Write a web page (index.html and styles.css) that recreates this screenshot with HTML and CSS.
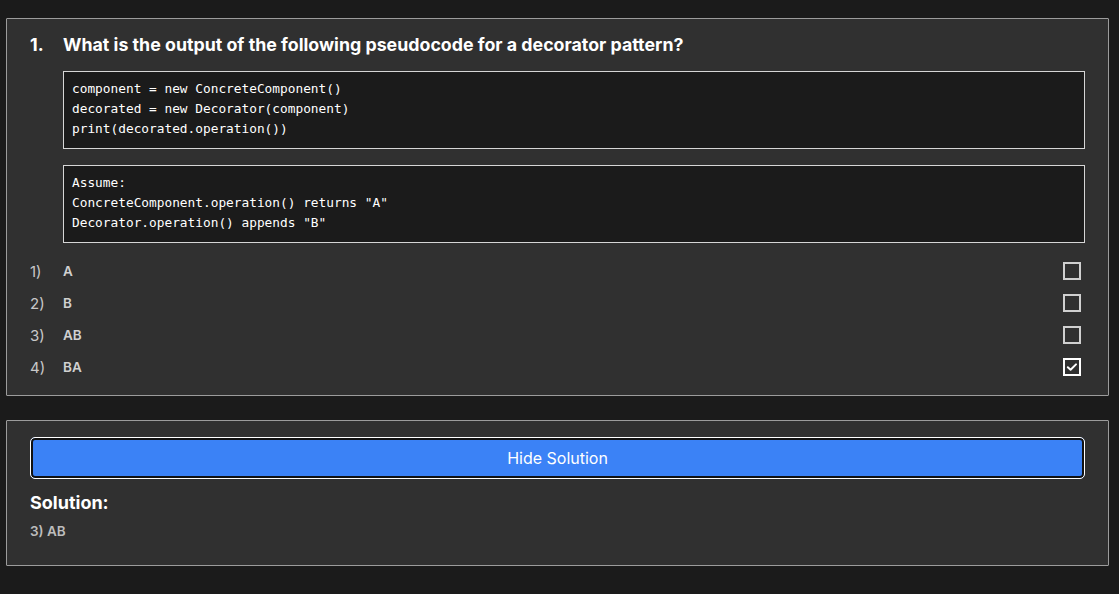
FILE: index.html
```html
<!DOCTYPE html>
<html>
<head>
<meta charset="utf-8">
<link rel="stylesheet" href="styles.css">
</head>
<body>
<div class="page">
  <section class="card question">
    <h2 class="q-title"><span class="q-num">1.</span><span class="q-text">What is the output of the following pseudocode for a decorator pattern?</span></h2>
    <pre class="code">component = new ConcreteComponent()
decorated = new Decorator(component)
print(decorated.operation())</pre>
    <pre class="code">Assume:
ConcreteComponent.operation() returns "A"
Decorator.operation() appends "B"</pre>
    <ul class="options">
      <li class="option"><span class="opt-num">1)</span><span class="opt-text">A</span><span class="check"></span></li>
      <li class="option"><span class="opt-num">2)</span><span class="opt-text">B</span><span class="check"></span></li>
      <li class="option"><span class="opt-num">3)</span><span class="opt-text">AB</span><span class="check"></span></li>
      <li class="option"><span class="opt-num">4)</span><span class="opt-text">BA</span><span class="check checked"><svg viewBox="0 0 18 18" width="18" height="18"><path d="M4.8 9.2 L7.6 11.8 L13 6.4" fill="none" stroke="#fff" stroke-width="2" stroke-linecap="round" stroke-linejoin="round"/></svg></span></li>
    </ul>
  </section>
  <section class="card solution">
    <button class="toggle">Hide Solution</button>
    <h3 class="sol-title">Solution:</h3>
    <p class="sol-text">3) AB</p>
  </section>
</div>
</body>
</html>
```
FILE: styles.css
```css
html, body {
  margin: 0;
  padding: 0;
  background: #1b1b1b;
}
body {
  font-family: Inter, "Liberation Sans", Arial, sans-serif;
  color: #fff;
}
.page {
  padding: 18px 10px 0 6px;
  display: flex;
  flex-direction: column;
  gap: 24px;
}
.card {
  background: #303030;
  border: 1px solid #9c9c9c;
  border-radius: 1px;
  padding: 14px 23px 12px 23px;
}
.q-title {
  margin: 0;
  display: flex;
  font-size: 17.8px;
  font-weight: 700;
  line-height: 24px;
  color: #fff;
}
.q-num {
  width: 33px;
  flex: none;
}
.code {
  margin: 14px 0 0 33px;
  background: #1b1b1b;
  border: 1px solid #d6d6d6;
  padding: 7px 8px 9px;
  font-family: "DejaVu Sans Mono", "Liberation Mono", monospace;
  font-size: 12.8px;
  line-height: 20px;
  color: #fff;
  white-space: pre;
}
.code + .code {
  margin-top: 16px;
}
.options {
  list-style: none;
  margin: 12px 0 0;
  padding: 0;
}
.option {
  display: flex;
  align-items: center;
  height: 32px;
}
.opt-num {
  width: 33px;
  flex: none;
  font-size: 15px;
  color: #c8c8c8;
}
.opt-text {
  flex: 1;
  font-size: 13.5px;
  font-weight: 600;
  color: #d0d0d0;
}
.check {
  width: 18px;
  height: 18px;
  box-sizing: border-box;
  border: 2px solid #d0d0d0;
  margin-right: 4px;
  position: relative;
}
.check.checked {
  border-color: #fff;
}
.check svg {
  position: absolute;
  left: -2px;
  top: -2px;
}
.solution {
  padding: 16px 23px 25px 23px;
}
.toggle {
  display: block;
  width: 100%;
  height: 42px;
  box-sizing: border-box;
  background: #3b82f6;
  border: 1px solid #fff;
  border-radius: 5px;
  box-shadow: inset 0 0 0 2px #111;
  color: #fff;
  font-family: Inter, "Liberation Sans", Arial, sans-serif;
  font-size: 16px;
  cursor: pointer;
}
.sol-title {
  margin: 12px 0 0;
  font-size: 18px;
  font-weight: 700;
  line-height: 24px;
}
.sol-text {
  margin: 7px 0 0;
  font-size: 13.5px;
  font-weight: 600;
  line-height: 18px;
  color: #bdbdbd;
}
```
